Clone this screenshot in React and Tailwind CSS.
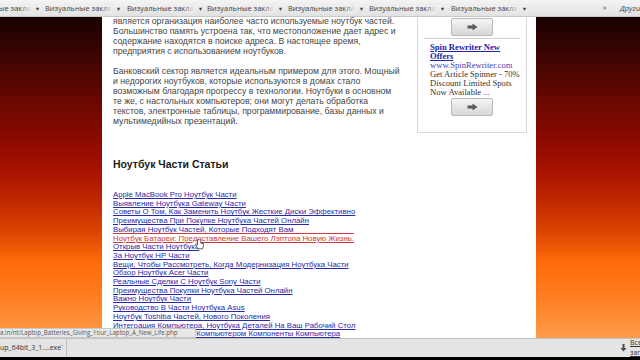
import React from "react";

const bookmarks = [-36, 45, 127, 207, 288, 369, 451];

const para1 = [
  "является организация наиболее часто используемые ноутбук частей.",
  "Большинство память устроена так, что местоположение дает адрес и",
  "содержание находятся в поиске адреса. В настоящее время,",
  "предприятия с использованием ноутбуков.",
];

const para2 = [
  "Банковский сектор является идеальным примером для этого. Мощный",
  "и недорогих ноутбуков, которые используются в домах стало",
  "возможным благодаря прогрессу в технологии. Ноутбуки в основном",
  "те же, с настольных компьютеров; они могут делать обработка",
  "текстов, электронные таблицы, программирование, базы данных и",
  "мультимедийных презентаций.",
];

const links = [
  "Apple MacBook Pro Ноутбук Части",
  "Выявление Ноутбука Gateway Части",
  "Советы О Том, Как Заменить Ноутбук Жесткие Диски Эффективно",
  "Преимущества При Покупке Ноутбука Частей Онлайн",
  "Выбирая Ноутбук Частей, Которые Подходят Вам",
  "Ноутбук Батареи: Предоставление Вашего Лэптопа Новую Жизнь.",
  "Открыв Части Ноутбука",
  "За Ноутбук HP Части",
  "Вещи, Чтобы Рассмотреть, Когда Модернизация Ноутбука Части",
  "Обзор Ноутбук Acer Части",
  "Реальные Сделки С Ноутбук Sony Части",
  "Преимущества Покупки Ноутбука Частей Онлайн",
  "Важно Ноутбук Части",
  "Руководство В Части Ноутбука Asus",
  "Ноутбук Toshiba Частей, Нового Поколения",
  "Интеграция Компьютера, Ноутбука Деталей На Ваш Рабочий Стол",
  "Ноутбук Управляемый Компьютером Компоненты Компьютера",
];

function Arrow() {
  return (
    <svg width="11" height="8" viewBox="0 0 11 8">
      <path d="M0.5 2.5h5V0.5l5 3.5-5 3.5V5.5h-5z" fill="#5a5a5a" />
    </svg>
  );
}

function ArrowButton() {
  return (
    <div className="mx-auto flex h-[18px] w-[42px] items-center justify-center rounded-[2px] border border-[#b8b8b8] bg-[linear-gradient(to_bottom,#f6f6f6,#d6d6d6)]">
      <Arrow />
    </div>
  );
}

const grad =
  "bg-[linear-gradient(to_bottom,#1a0101_0%,#360402_10%,#680800_26%,#8c0a00_38%,#a81200_48%,#c02800_57%,#d84000_66%,#fe6a0a_76%,#ff8022_88%,#fe9c4c_100%)]";

export default function App() {
  return (
    <div className="relative flex h-[360px] w-[640px] flex-col overflow-hidden bg-black font-['Liberation_Sans',Arial,sans-serif]">
      {/* bookmarks bar */}
      <div className="relative h-[17px] shrink-0 overflow-hidden border-b border-[#c8c8c8] bg-[linear-gradient(to_bottom,#f4f4f4,#e2e2e2)] font-['Open_Sans',sans-serif] text-[7.5px] text-[#444]">
        {bookmarks.map((x) => (
          <div
            key={x}
            className="absolute top-[3px] flex items-center"
            style={{ left: x }}
          >
            <span className="relative">
              Визуальные закла
              <span className="absolute right-0 top-0 h-full w-[10px] bg-[linear-gradient(to_right,rgba(236,236,236,0),#ececec)]" />
            </span>
            <span className="ml-[4px] text-[5.5px]">▼</span>
          </div>
        ))}
        <div className="absolute left-[603px] top-[3px] text-[7px]">»</div>
        <div className="absolute left-[620px] top-[3px] italic">Други</div>
      </div>

      {/* main */}
      <div className="flex h-[321px] shrink-0">
        <div className={`w-[102px] shrink-0 ${grad}`} />
        <div className="flex w-[434px] shrink-0 overflow-hidden bg-white pl-[11px]">
          {/* text column */}
          <div className="mt-[-1px] w-[284px] shrink-0">
            <p className="whitespace-nowrap text-[8.7px] leading-[10px] text-[#454545]">
              {para1.map((t, i) => (
                <span key={i} className="block">
                  {t}
                </span>
              ))}
            </p>
            <p className="mt-[10px] whitespace-nowrap text-[8.7px] leading-[10px] text-[#454545]">
              {para2.map((t, i) => (
                <span key={i} className="block">
                  {t}
                </span>
              ))}
            </p>
            <h2 className="mt-[31px] text-[10.5px] font-bold leading-[14px] text-[#1c1c1c]">
              Ноутбук Части Статьи
            </h2>
            <ul className="mt-[20px] text-[7.8px] leading-[8.7px]">
              {links.map((l, i) => (
                <li key={i} className="relative whitespace-nowrap">
                  {i === 5 ? (
                    <span className="text-[#cc3b3b] [text-decoration-line:underline_overline]">
                      {l}
                    </span>
                  ) : (
                    <span className="text-[#2a2aa8] underline">{l}</span>
                  )}
                  {i === 6 && (
                    <svg
                      className="absolute left-[82px] top-[-4px]"
                      width="9"
                      height="11"
                      viewBox="0 0 9 11"
                    >
                      <path
                        d="M2.5 0.8v5.2L1.5 5.2c-.6-.5-1.3 0-.8.7L3 9.8h4.5l1-3V5c0-.6-.9-.6-.9 0V4.4c0-.6-.9-.6-.9 0v-.3c0-.6-.9-.6-.9 0V.8c0-.6-1.4-.6-1.4 0z"
                        fill="#fff"
                        stroke="#222"
                        strokeWidth="0.7"
                      />
                    </svg>
                  )}
                </li>
              ))}
            </ul>
          </div>
          {/* right column ad box */}
          <div className="ml-[20px] mt-[-20px] h-[136px] w-[110px] shrink-0 border border-[#d8d8d8] px-[6px]">
            <div className="mt-[20px]">
              <ArrowButton />
            </div>
            <div className="mt-[2px] border-t border-[#cfcfcf]" />
            <div className="pl-[6px] pt-[4px] font-['Liberation_Serif',serif] text-[8.6px] leading-[9px]">
              <div className="font-bold text-[#2222a8] underline">
                Spin Rewriter New Offers
              </div>
              <div className="text-[#4040c0]">www.SpinRewriter.com</div>
              <div className="text-[#333]">
                Get Article Spinner - 70% Discount Limited Spots Now Available
                ...
              </div>
            </div>
            <div className="mt-[1px]">
              <ArrowButton />
            </div>
          </div>
        </div>
        <div className={`flex-1 ${grad}`} />
      </div>

      {/* download bar */}
      <div className="relative flex h-[19px] shrink-0 items-center border-t border-[#c4c4c4] bg-[#e4e4e4] text-[6.5px] text-[#333]">
        <div className="flex h-full w-[67px] items-center border-r border-[#c0c0c0]">
          <span className="font-['Open_Sans',sans-serif] text-[7px]">up_64bit_3_1....exe</span>
          <span className="ml-auto mr-[3px] text-[5px] text-[#555]">ˆ</span>
        </div>
        <div className="ml-auto flex items-center gap-[3px]">
          <svg width="7" height="8" viewBox="0 0 7 8">
            <path d="M2.5 0h2v4h2L3.5 7.5 0.5 4h2z" fill="#4a4a4a" />
          </svg>
          <span className="w-[10px] overflow-hidden font-['Open_Sans',sans-serif] text-[7px] text-[#333] underline">
            Все загрузки
          </span>
        </div>
      </div>
      <div className="h-[2px] shrink-0 bg-black" />

      {/* status url overlay */}
      <div className="absolute left-0 top-[328px] flex h-[10px] w-[196px] items-center overflow-hidden border border-l-0 border-[#c8c8c8] bg-[#e8e8e8] font-['Open_Sans',sans-serif] text-[6.2px] text-[#555]">
        a.in/nt/Laptop_Batteries_Giving_Your_Laptop_A_New_Life.php
      </div>
    </div>
  );
}
